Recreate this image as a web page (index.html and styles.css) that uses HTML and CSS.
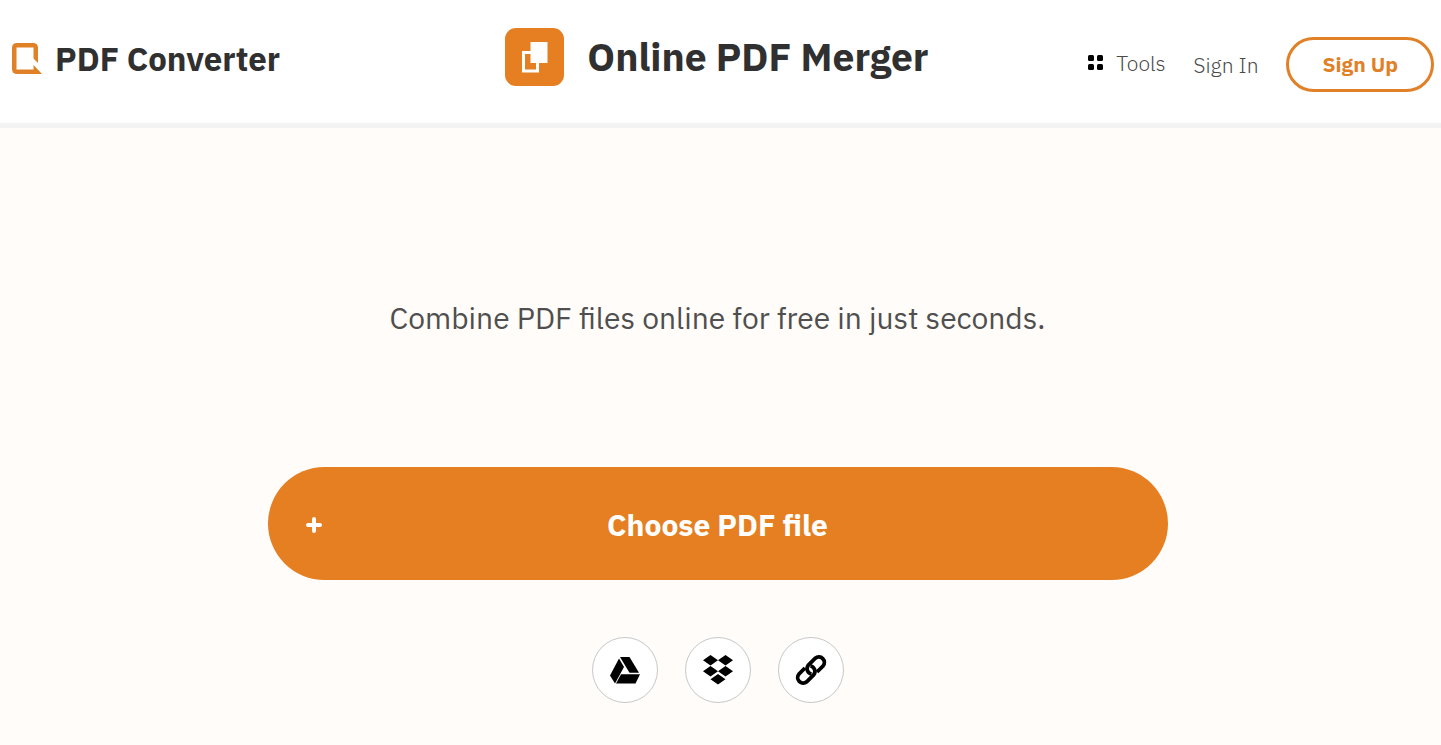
FILE: index.html
```html
<!DOCTYPE html>
<html lang="en">
<head>
    <meta charset="UTF-8">
    <meta name="viewport" content="width=device-width, initial-scale=1.0">
    <title>Online PDF Merger</title>
    <link rel="stylesheet" href="styles.css">
</head>
<body>

<header class="header">
    <a class="brand" href="#">
        <svg width="31" height="31" viewBox="0 0 31 31" aria-hidden="true">
            <path fill="#e08128" fill-rule="evenodd" d="M5 0H21Q26 0 26 5V20L21.500 15.500V4.500H4.500V26.500H21.500V22L30 31H5Q0 31 0 26V5Q0 0 5 0Z"/>
        </svg>
        <span>PDF Converter</span>
    </a>
    <div class="title">
        <svg width="59" height="58" viewBox="0 0 59 58" aria-hidden="true">
            <rect width="59" height="58" rx="11" fill="#e57f21"/>
            <path fill="none" stroke="#fff" stroke-width="3" d="M26 24.500H18.500V43H32.500V35"/>
            <path fill="#fff" d="M25.500 14H42.500V35H25.500Z"/>
        </svg>
        <h1>Online PDF Merger</h1>
    </div>
    <nav class="nav">
        <button class="tools" type="button">
            <svg width="16" height="16" viewBox="0 0 16 16" aria-hidden="true">
                <rect width="6" height="6" rx="1.500"/>
                <rect x="9" width="6" height="6" rx="1.500"/>
                <rect y="9" width="6" height="6" rx="1.500"/>
                <rect x="9" y="9" width="6" height="6" rx="1.500"/>
            </svg>
            <span>Tools</span>
        </button>
        <a class="sign-in" href="#">Sign In</a>
        <a class="sign-up" href="#">Sign Up</a>
    </nav>
</header>

<main class="main">
    <p class="tagline">Combine PDF files online for free in just seconds.</p>
    <button class="choose-button" type="button">
        <svg width="16" height="16" viewBox="0 0 16 16" aria-hidden="true">
            <path d="M8 2V14M2 8H14" stroke="#fff" stroke-width="4" stroke-linecap="round"/>
        </svg>
        <span>Choose PDF file</span>
    </button>
    <div class="sources">
        <button class="source-button" type="button" aria-label="Google Drive">
            <svg width="32" height="32" viewBox="0 0 32 32" aria-hidden="true">
                <path d="M11 3H20.500L30 18.800H20.500Z"/>
                <path d="M10 4.500L15 13L6 29.500L1 21.500Z"/>
                <path d="M12 20.200H31L26.500 29.500H7Z"/>
            </svg>
        </button>
        <button class="source-button" type="button" aria-label="Dropbox">
            <svg width="32" height="32" viewBox="0 0 32 32" aria-hidden="true">
                <path d="M8.500 1L16 6.200L8.500 11.400L1 6.200ZM23.500 1L31 6.200L23.500 11.400L16 6.200ZM8.500 12L16 17.200L8.500 22.400L1 17.200ZM23.500 12L31 17.200L23.500 22.400L16 17.200ZM16 20L23.500 25.200L16 30.500L8.500 25.200Z"/>
            </svg>
        </button>
        <button class="source-button" type="button" aria-label="Link">
            <svg width="32" height="32" viewBox="0 0 32 32" aria-hidden="true">
                <g fill="none" stroke="#000" stroke-width="3.800">
                    <path d="M16.500 20A5.500 5.500 0 0 1 13.200 11.300L20.300 4.200A5.500 5.500 0 0 1 28 12L22 18"/>
                    <path d="M15.500 12A5.500 5.500 0 0 1 18.800 20.700L11.700 27.800A5.500 5.500 0 0 1 4 20L10 14"/>
                </g>
            </svg>
        </button>
    </div>
</main>

</body>
</html>
```
FILE: styles.css
```css
* {
    box-sizing: border-box;
}
body {
    margin: 0;
    background-color: #fffcf9;
    color: #303030;
    font-family: "IBM Plex Sans", "Noto Sans", sans-serif;
}
button {
    padding: 0;
    border: none;
    background: none;
    color: inherit;
    font: inherit;
    cursor: pointer;
}
a {
    color: inherit;
    text-decoration: none;
}
svg {
    flex-shrink: 0;
}
.header {
    display: grid;
    grid-template-columns: 1fr auto 1fr;
    align-items: start;
    padding: 28px 7px 31px 0;
    border-bottom: 5px solid #f3f3f3;
    background-color: #fff;
}
.brand {
    display: flex;
    align-items: center;
    gap: 12px;
    padding-left: 12px;
    font-size: 33px;
    font-weight: 700;
    line-height: 61px;
}
.title {
    display: flex;
    align-items: center;
    gap: 23px;
}
.title h1 {
    margin: 0;
    font-size: 39px;
    font-weight: 700;
    line-height: 58px;
}
.nav {
    display: flex;
    align-items: center;
    justify-content: flex-end;
    gap: 28px;
    padding-top: 9px;
    color: #4a4a4a;
    font-size: 21px;
    font-weight: 300;
    line-height: 26px;
}
.tools {
    display: flex;
    align-items: center;
    gap: 12px;
    padding-bottom: 4px;
}
.tools svg {
    fill: #000;
}
.sign-up {
    padding: 11px 33px 12px;
    border: 3px solid #e08128;
    border-radius: 28px;
    color: #e08128;
    font-weight: 700;
}
.main {
    display: flex;
    flex-direction: column;
    align-items: center;
    padding: 169px 6px 40px 0;
}
.tagline {
    margin: 0 0 129px;
    color: #4f4f4f;
    font-size: 30px;
    line-height: 41px;
}
.choose-button {
    display: grid;
    grid-template-columns: 1fr auto 1fr;
    align-items: center;
    width: 100%;
    max-width: 900px;
    padding: 37px 38px 35px;
    border-radius: 57px;
    background-color: #e57f21;
    color: #fff;
    font-size: 30px;
    font-weight: 700;
    line-height: 41px;
}
.sources {
    display: flex;
    gap: 27px;
    margin-top: 57px;
}
.source-button {
    display: flex;
    align-items: center;
    justify-content: center;
    width: 66px;
    height: 66px;
    border: 1px solid #c8c8c8;
    border-radius: 50%;
    background-color: #fff;
}
```
